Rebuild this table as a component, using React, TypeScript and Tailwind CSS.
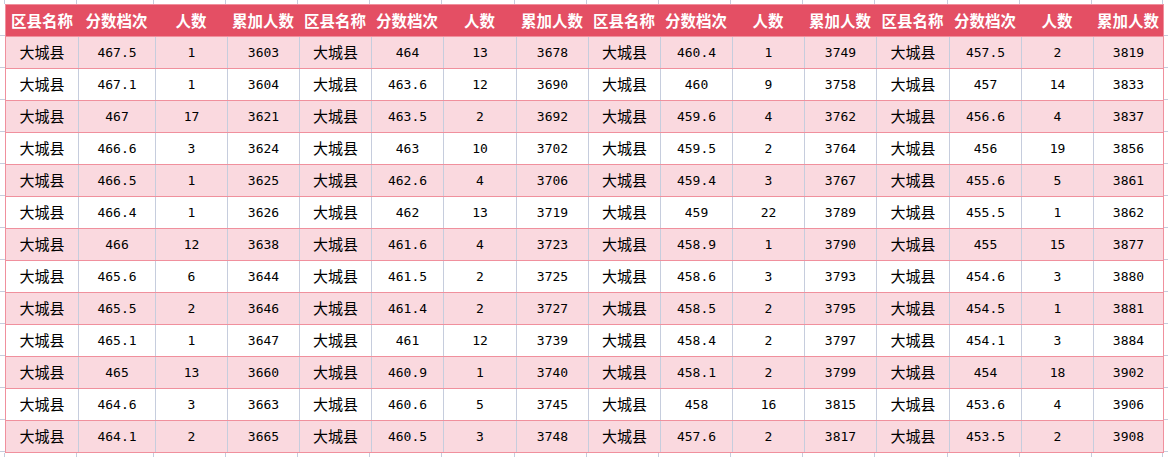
const widths = [72, 77, 72, 72, 72, 72, 73, 72, 72, 72, 72, 72, 73, 72, 72, 71];

const headers = ["区县名称", "分数档次", "人数", "累加人数"];

const groups: [string, number, number][][] = [
  [
    ["467.5", 1, 3603], ["467.1", 1, 3604], ["467", 17, 3621], ["466.6", 3, 3624],
    ["466.5", 1, 3625], ["466.4", 1, 3626], ["466", 12, 3638], ["465.6", 6, 3644],
    ["465.5", 2, 3646], ["465.1", 1, 3647], ["465", 13, 3660], ["464.6", 3, 3663],
    ["464.1", 2, 3665],
  ],
  [
    ["464", 13, 3678], ["463.6", 12, 3690], ["463.5", 2, 3692], ["463", 10, 3702],
    ["462.6", 4, 3706], ["462", 13, 3719], ["461.6", 4, 3723], ["461.5", 2, 3725],
    ["461.4", 2, 3727], ["461", 12, 3739], ["460.9", 1, 3740], ["460.6", 5, 3745],
    ["460.5", 3, 3748],
  ],
  [
    ["460.4", 1, 3749], ["460", 9, 3758], ["459.6", 4, 3762], ["459.5", 2, 3764],
    ["459.4", 3, 3767], ["459", 22, 3789], ["458.9", 1, 3790], ["458.6", 3, 3793],
    ["458.5", 2, 3795], ["458.4", 2, 3797], ["458.1", 2, 3799], ["458", 16, 3815],
    ["457.6", 2, 3817],
  ],
  [
    ["457.5", 2, 3819], ["457", 14, 3833], ["456.6", 4, 3837], ["456", 19, 3856],
    ["455.6", 5, 3861], ["455.5", 1, 3862], ["455", 15, 3877], ["454.6", 3, 3880],
    ["454.5", 1, 3881], ["454.1", 3, 3884], ["454", 18, 3902], ["453.6", 4, 3906],
    ["453.5", 2, 3908],
  ],
];

const cjk = "font-['Noto_Sans_CJK_SC',sans-serif]";
const mono = "font-['DejaVu_Sans_Mono','Noto_Sans_CJK_SC',monospace]";

// faint sheet grid strip above / below the table
function GridStrip({ h }: { h: string }) {
  return (
    <div className={`flex ${h}`}>
      <div className="w-[5px] shrink-0 border-r border-[#c6cddd]" />
      {widths.map((w, i) => (
        <div key={i} className="shrink-0 border-r border-[#c6cddd]" style={{ width: w }} />
      ))}
    </div>
  );
}

export default function App() {
  const rows = groups[0].map((_, r) => groups.flatMap((g) => ["大城县", g[r][0], String(g[r][1]), String(g[r][2])]));

  return (
    <div className="h-[457px] w-[1168px] overflow-hidden bg-white text-black">
      <GridStrip h="h-[4px]" />
      <div className="flex">
        <div className="w-[5px] shrink-0">
          <div className="h-[32px] border-b border-[#c6cddd]" />
          {rows.map((_, i) => (
            <div key={i} className="h-[32px] border-b border-[#c6cddd]" />
          ))}
        </div>
        <div className="shrink-0 border-x border-[#f0909d]">
          <div className={`flex h-[32px] border-t border-[#f0909d] bg-[#e44f64] ${cjk}`}>
            {widths.map((w, i) => (
              <div
                key={i}
                className="flex shrink-0 items-center justify-center text-[15.5px] font-bold text-white"
                style={{ width: i === widths.length - 1 ? w - 1 : w }}
              >
                {headers[i % 4]}
              </div>
            ))}
          </div>
          {rows.map((row, r) => (
            <div
              key={r}
              className={`flex h-[32px] border-t border-[#f0909d] ${r % 2 === 0 ? "bg-[#fad9df]" : "bg-white"}`}
            >
              {row.map((v, i) => (
                <div
                  key={i}
                  className={`flex shrink-0 items-center justify-center ${i > 0 ? "border-l border-[#c6cddd]" : ""} ${
                    i % 4 === 0 ? `${cjk} text-[15px]` : `${mono} text-[13px]`
                  }`}
                  style={{ width: i === row.length - 1 ? widths[i] - 1 : widths[i] }}
                >
                  {v}
                </div>
              ))}
            </div>
          ))}
          <div className="border-t border-[#f0909d]" />
        </div>
        <div className="flex-1">
          <div className="h-[32px] border-b border-[#c6cddd]" />
          {rows.map((_, i) => (
            <div key={i} className="h-[32px] border-b border-[#c6cddd]" />
          ))}
        </div>
      </div>
      <GridStrip h="h-[20px]" />
    </div>
  );
}
